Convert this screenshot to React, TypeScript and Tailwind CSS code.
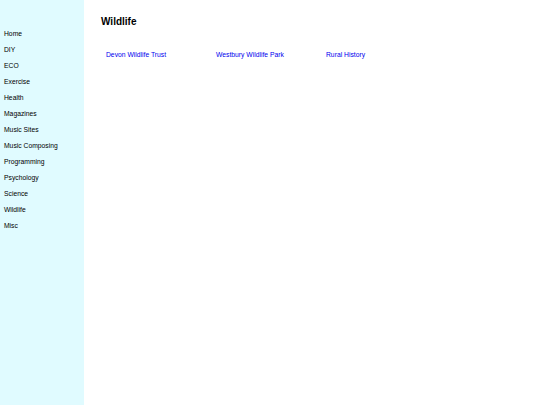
const navItems = [
  "Home",
  "DIY",
  "ECO",
  "Exercise",
  "Health",
  "Magazines",
  "Music Sites",
  "Music Composing",
  "Programming",
  "Psychology",
  "Science",
  "Wildlife",
  "Misc",
];

const links = ["Devon Wildlife Trust", "Westbury Wildlife Park", "Rural History"];

export default function App() {
  return (
    <div
      className="flex h-[405px] w-[540px] bg-white"
      style={{ fontFamily: '"Liberation Sans", Arial, sans-serif' }}
    >
      {/* Sidebar */}
      <aside className="flex w-[84px] shrink-0 flex-col bg-[#e0fbff] pl-1 pt-[26px]">
        {navItems.map((item) => (
          <a
            key={item}
            href="#"
            className="flex h-4 items-center text-[6.75px] text-black"
          >
            {item}
          </a>
        ))}
      </aside>

      {/* Main */}
      <main className="flex-1 pl-[17px] pt-[15px]">
        <h1 className="text-[10px] font-bold leading-[14px] text-black">
          Wildlife
        </h1>
        <div className="mt-[22px] flex pl-[5px]">
          {links.map((link) => (
            <a
              key={link}
              href="#"
              className="w-[110px] text-[6.75px] leading-[8px] text-[#0000ee]"
            >
              {link}
            </a>
          ))}
        </div>
      </main>
    </div>
  );
}
